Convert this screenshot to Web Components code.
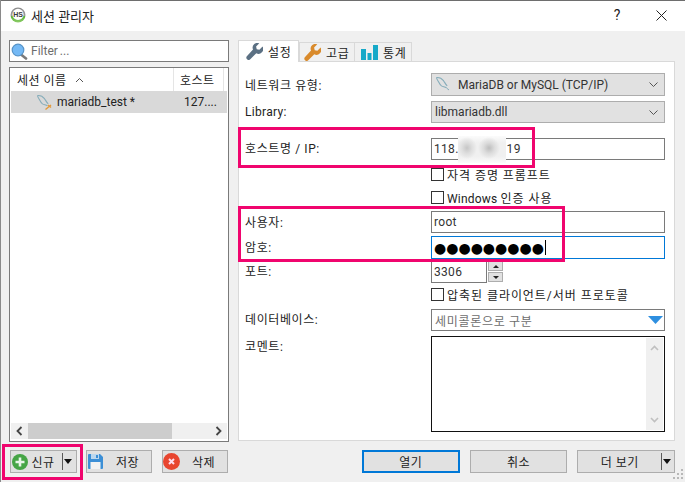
<!DOCTYPE html>
<html lang="ko">
<head>
<meta charset="utf-8">
<title>세션 관리자</title>
<style>
  html, body { margin:0; padding:0; background:#f0f0f0; }
  body { font:12px Roboto, "Noto Sans CJK KR", sans-serif; color:#1a1a1a; }
</style>
</head>
<body>
<session-manager></session-manager>

<script>
const WRENCH = 'M15.600 3.400l-3 3-2.500-.6-.6-2.500 3-3a4.500 4.500 0 0 0-5.900 5.900L1 12.300a2.100 2.100 0 0 0 3 3l5.700-5.600a4.500 4.500 0 0 0 5.900-6.300z';
const dolphin = (tail) => `<svg width="17" height="17" viewBox="0 0 17 17" fill="none">
  <path d="M1.500 1.500c3-.4 5.200.8 7 3.200 1.200 1.700 2 3.600 3.700 5.200M1.500 1.500c.2 2 1.300 2.800 2 4.200.8 1.600 1.300 3 3 4.200 1.600 1 3.400.8 5 2" stroke="#86adba" stroke-width="1.100"/>
  ${tail ? '<path d="M9.500 15.500l5.500-4.500M12 11l3 2.500" stroke="#e39a3c" stroke-width="1.400"/>' : '<path d="M11.500 12l2.500 2" stroke="#86adba"/>'}
</svg>`;

class TitleBar extends HTMLElement {
  constructor() {
    super();
    this.attachShadow({ mode: 'open' });
    this.shadowRoot.innerHTML = `
      <style>
        :host { display:flex; align-items:center; height:30px; background:#fff; border-top:1px solid #6e6e6e; font-size:13px; }
        .logo { margin:0 5px 0 9px; width:16px; height:16px; position:relative; top:-1px; }
        .name { flex:1; color:#222; position:relative; top:-1px; }
        .help { width:16px; text-align:center; margin-right:31px; font-size:14px; position:relative; top:-1px; }
        svg.x { margin-right:18px; position:relative; top:-1px; }
      </style>
      <svg class="logo" viewBox="0 0 16 16">
        <defs><linearGradient id="g" x1="0" y1="0" x2="0" y2="1">
          <stop offset="0" stop-color="#8a8a8a"/><stop offset=".55" stop-color="#9a9a9a"/>
          <stop offset=".6" stop-color="#5cb23a"/><stop offset="1" stop-color="#8fce6a"/>
        </linearGradient></defs>
        <circle cx="8" cy="8" r="7.500" fill="url(#g)"/>
        <circle cx="8" cy="7.400" r="5.600" fill="#fff"/>
        <text x="8" y="10" font-size="7" font-weight="700" text-anchor="middle" fill="#3a3a3a" font-family="Liberation Sans">HS</text>
      </svg>
      <span class="name"><slot></slot></span>
      <span class="help">?</span>
      <svg class="x" width="11" height="11" viewBox="0 0 11 11"><path d="M.5.500l10 10M10.500.500l-10 10" stroke="#222" stroke-width="1"/></svg>`;
  }
}
customElements.define('title-bar', TitleBar);

class FilterBox extends HTMLElement {
  constructor() {
    super();
    this.attachShadow({ mode: 'open' });
    this.shadowRoot.innerHTML = `
      <style>
        :host { display:flex; align-items:center; height:20px; background:#fff; border:1px solid #7a7a7a; color:#6d6d6d; word-spacing:-1px; }
        svg { margin:0 3px 0 1px; flex:none; }
      </style>
      <svg width="17" height="17" viewBox="0 0 17 17">
        <line x1="10" y1="11.500" x2="15" y2="15.500" stroke="#7b7b7b" stroke-width="2.600" stroke-linecap="round"/>
        <circle cx="7" cy="7" r="5.800" fill="#74b9f5" stroke="#5593c8" stroke-width="1.200"/>
      </svg>
      <slot></slot>`;
  }
}
customElements.define('filter-box', FilterBox);

class SessionList extends HTMLElement {
  constructor() {
    super();
    this.attachShadow({ mode: 'open' });
    this.shadowRoot.innerHTML = `
      <style>
        :host { display:flex; flex-direction:column; flex:1; background:#fff; border:1px solid #7a7a7a; padding:0 1px 1px; min-height:0; color:#222; }
        .head { display:flex; height:23px; align-items:center; letter-spacing:.5px; }
        .head div { height:100%; display:flex; align-items:center; border-right:1px solid #e5e5e5; box-sizing:border-box; }
        .c1 { width:163px; padding-left:6px; gap:8px; }
        .c2 { width:50px; padding-left:6px; }
        .row { display:flex; align-items:center; height:22px; background:#d9d9d9; width:216px; }
        .row svg { margin-left:25px; margin-right:4px; flex:none; }
        .name { width:127px; }
        .fill { flex:1; }
        .sb { height:16px; display:flex; align-items:center; background:#f0f0f0; width:216px; margin-bottom:1px; }
        .arrow { width:17px; display:flex; justify-content:center; flex:none; }
        .thumb { width:144px; height:16px; background:#cdcdcd; }
        .rest { flex:1; }
      </style>
      <div class="head">
        <div class="c1">세션 이름 <svg width="9" height="6" viewBox="0 0 9 6" fill="none"><path d="M1 5l3.500-3.500L8 5" stroke="#555"/></svg></div>
        <div class="c2">호스트</div>
      </div>
      <div class="row">${dolphin(true)}<span class="name">mariadb_test *</span><span>127....</span></div>
      <div class="fill"></div>
      <div class="sb">
        <span class="arrow"><svg width="7" height="10" viewBox="0 0 7 10" fill="none"><path d="M5.500 1l-4 4 4 4" stroke="#444" stroke-width="1.800"/></svg></span>
        <span class="thumb"></span><span class="rest"></span>
        <span class="arrow"><svg width="7" height="10" viewBox="0 0 7 10" fill="none"><path d="M1.500 1l4 4-4 4" stroke="#444" stroke-width="1.800"/></svg></span>
      </div>`;
  }
}
customElements.define('session-list', SessionList);

class HsButton extends HTMLElement {
  constructor() {
    super();
    this.attachShadow({ mode: 'open' });
    const split = this.hasAttribute('split');
    this.shadowRoot.innerHTML = `
      <style>
        :host { display:flex; align-items:center; box-sizing:border-box; height:23px; background:#e1e1e1; border:1px solid #adadad; color:#222; letter-spacing:.5px; }
        :host([primary]) { border:2px solid #0078d7; }
        .ic { display:flex; flex:none; }
        .txt { flex:1; text-align:center; padding-right:var(--text-pad, 0); }
        .split { flex:none; width:var(--split, 14px); height:21px; display:flex; align-items:center; box-sizing:border-box; }
        .split i { display:block; width:1px; height:17px; background:#5a5a5a; margin-right:1px; flex:none; }
        .split b { width:0; height:0; border:4.500px solid transparent; border-top:5px solid #111; border-bottom:0; flex:none; }
      </style>
      <span class="ic"><slot name="icon"></slot></span>
      <span class="txt"><slot></slot></span>
      ${split ? '<span class="split"><i></i><b></b></span>' : ''}`;
  }
}
customElements.define('hs-button', HsButton);

class HsTabs extends HTMLElement {
  constructor() {
    super();
    this.attachShadow({ mode: 'open' });
    const tab = (label, icon, cls = '') => `<div class="tab ${cls}">${icon}<span>${label}</span></div>`;
    const wrench = c => `<svg width="17" height="17" viewBox="0 0 16 16"><path d="${WRENCH}" fill="${c}"/></svg>`;
    const bars = `<svg width="17" height="17" viewBox="0 0 17 17"><path d="M0 5h5v11H0zM6.500 9h4v7h-4zM12 1h5v15h-5z" fill="#16a9c8"/></svg>`;
    this.shadowRoot.innerHTML = `
      <style>
        :host { display:flex; align-items:flex-end; height:21px; position:relative; z-index:1; color:#222; letter-spacing:.8px; }
        .tab { display:flex; align-items:center; gap:5px; box-sizing:border-box; height:19px; width:56px; padding-left:4px; background:#f0f0f0; border:1px solid #d9d9d9; border-bottom:0; margin-right:-1px; }
        .tab + .tab + .tab { width:58px; padding-left:6px; }
        .on { width:61px; height:22px; background:#fff; padding:0 0 1px 7px; margin-bottom:-1px; margin-right:0; z-index:1; }
      </style>
      ${tab('설정', wrench('#5b7083'), 'on')}
      ${tab('고급', wrench('#d98a2b'))}
      ${tab('통계', bars)}`;
  }
}
customElements.define('hs-tabs', HsTabs);

class HsCombo extends HTMLElement {
  constructor() {
    super();
    this.attachShadow({ mode: 'open' });
    const blue = this.hasAttribute('blue');
    this.shadowRoot.innerHTML = `
      <style>
        :host { display:flex; align-items:center; box-sizing:border-box; height:100%; background:#e1e1e1; border:1px solid #adadad; padding-left:3px; color:#333; letter-spacing:0; }
        :host([blue]) { background:#fff; border-color:#7a7a7a; color:#6d6d6d; letter-spacing:.7px; }
        .t { flex:1; display:flex; align-items:center; gap:6px; }
        .c { margin-right:6px; }
        .tri { margin-right:1px; }
      </style>
      <span class="t"><slot></slot></span>
      ${blue
        ? '<svg class="tri" width="15" height="8" viewBox="0 0 15 8"><path d="M0 0h15L7.500 8z" fill="#2e8fe0"/></svg>'
        : '<svg class="c" width="9" height="5" viewBox="0 0 9 5" fill="none"><path d="M.5.500l4 4 4-4" stroke="#555"/></svg>'}`;
  }
}
customElements.define('hs-combo', HsCombo);

class HsInput extends HTMLElement {
  constructor() {
    super();
    this.attachShadow({ mode: 'open' });
    this.shadowRoot.innerHTML = `
      <style>
        :host { display:flex; align-items:center; box-sizing:border-box; height:100%; background:#fff; border:1px solid #7a7a7a; padding-left:2px; color:#333; letter-spacing:.3px; position:relative; }
        :host([focus]) { border-color:#0078d7; }
      </style>
      <slot></slot>`;
  }
}
customElements.define('hs-input', HsInput);

class HsCheck extends HTMLElement {
  constructor() {
    super();
    this.attachShadow({ mode: 'open' });
    this.shadowRoot.innerHTML = `
      <style>
        :host { display:flex; align-items:center; gap:3px; height:100%; color:#222; letter-spacing:.95px; white-space:nowrap; }
        i { display:block; box-sizing:border-box; width:13px; height:13px; background:#fff; border:1px solid #333; flex:none; }
      </style>
      <i></i><span><slot></slot></span>`;
  }
}
customElements.define('hs-check', HsCheck);

class HsSpin extends HTMLElement {
  constructor() {
    super();
    this.attachShadow({ mode: 'open' });
    this.shadowRoot.innerHTML = `
      <style>
        :host { display:flex; height:100%; width:72px; }
        .v { flex:1; box-sizing:border-box; border:1px solid #7a7a7a; background:#fff; padding-left:2px; display:flex; align-items:center; color:#333; letter-spacing:.3px; }
        .s { width:15px; margin-left:1px; display:flex; flex-direction:column; gap:1px; }
        .s span { height:10px; background:#e1e1e1; border:1px solid #adadad; box-sizing:border-box; display:flex; align-items:center; justify-content:center; }
        .u { border-bottom:3.500px solid #222; border-left:3px solid transparent; border-right:3px solid transparent; }
        .d { border-top:3.500px solid #222; border-left:3px solid transparent; border-right:3px solid transparent; }
      </style>
      <div class="v"><slot></slot></div>
      <div class="s"><span><i class="u"></i></span><span><i class="d"></i></span></div>`;
  }
}
customElements.define('hs-spin', HsSpin);

class HsMemo extends HTMLElement {
  constructor() {
    super();
    this.attachShadow({ mode: 'open' });
    this.shadowRoot.innerHTML = `
      <style>
        :host { display:flex; justify-content:flex-end; box-sizing:border-box; height:100%; background:#fff; border:1px solid #111; padding:1px; }
        .sb { width:17px; background:#f0f0f0; display:flex; flex-direction:column; justify-content:space-between; align-items:center; padding:7px 0; box-sizing:border-box; }
      </style>
      <div class="sb">
        <svg width="9" height="6" viewBox="0 0 9 6" fill="none"><path d="M1 5l3.500-3.500L8 5" stroke="#c0c0c0" stroke-width="1.600"/></svg>
        <svg width="9" height="6" viewBox="0 0 9 6" fill="none"><path d="M1 1l3.500 3.500L8 1" stroke="#c0c0c0" stroke-width="1.600"/></svg>
      </div>`;
  }
}
customElements.define('hs-memo', HsMemo);

class PinkMark extends HTMLElement {
  constructor() {
    super();
    this.attachShadow({ mode: 'open' });
    this.shadowRoot.innerHTML = `
      <style>:host { display:block; position:absolute; box-sizing:border-box; border:3px solid #f0056e; pointer-events:none; z-index:5; }</style>`;
  }
}
customElements.define('pink-mark', PinkMark);

class SessionManager extends HTMLElement {
  constructor() {
    super();
    this.attachShadow({ mode: 'open' });
    this.shadowRoot.innerHTML = `
      <style>
        :host { display:flex; flex-direction:column; position:relative; width:685px; height:482px; overflow:hidden; background:#f0f0f0; font:12px Roboto, "Noto Sans CJK KR", sans-serif; box-sizing:border-box; border-left:1px solid #8a8a8a; }
        .main { flex:1; display:flex; min-height:0; padding:9px 0 0 8px; }
        .left { width:220px; display:flex; flex-direction:column; flex:none; }
        .left session-list { margin-top:5px; }
        .lbtns { display:flex; height:23px; margin:8px 0 9px 1px; }
        .lbtns hs-button { width:66px; }
        .lbtns hs-button:first-child { width:67px; margin-right:9px; --text-pad:4px; }
        .lbtns hs-button + hs-button + hs-button { margin-left:10px; }
        .lbtns hs-button:first-child [slot=icon] { margin-left:1px; }
        .right { width:437px; margin-left:9px; display:flex; flex-direction:column; flex:none; }
        .panel { flex:1; box-sizing:border-box; background:#fff; border:1px solid #d9d9d9; padding:11px 8px 0 6px; display:grid; grid-template-columns:186px 234px; align-content:start; color:#222; letter-spacing:.6px; min-height:0; }
        .lb { display:flex; align-items:center; box-sizing:border-box; }
        .up { padding-bottom:3px; }
        .rbtns { display:flex; height:23px; margin:9px 0 9px 124px; }
        .rbtns hs-button { width:98px; }
        .rbtns hs-button + hs-button { margin-left:10px; }
        .blur { position:absolute; left:26px; top:-3px; width:48px; height:27px; background:radial-gradient(ellipse 10px 11px at 9px 12px,#c6c6c6 0,#dedede 50%,transparent 100%),radial-gradient(ellipse 11px 11px at 31px 12px,#bdbdbd 0,#dcdcdc 50%,transparent 100%),linear-gradient(#fbfbfb,#f0f0f0 25%,#f0f0f0 75%,#fbfbfb); }
        .gap { display:inline-block; width:48px; }
        .dots { font-family:"DejaVu Sans", sans-serif; font-size:14px; letter-spacing:0; color:#000; line-height:18px; }
        .caret { display:inline-block; width:1px; height:15px; background:#000; margin-left:1px; }
        .h23 { height:23px; } .h22 { height:22px; }
        .grip { position:absolute; right:1px; bottom:2px; }
      </style>
      <title-bar>세션 관리자</title-bar>
      <div class="main">
        <div class="left">
          <filter-box>Filter ...</filter-box>
          <session-list></session-list>
          <div class="lbtns">
            <hs-button split>
              <svg slot="icon" width="16" height="16" viewBox="0 0 16 16"><circle cx="8" cy="8" r="8" fill="#46a546"/><path d="M8 3.500v9M3.500 8h9" stroke="#e8f5e8" stroke-width="2.600"/></svg>신규
            </hs-button>
            <hs-button>
              <svg slot="icon" width="17" height="17" viewBox="0 0 17 17"><path d="M1 2q0-1 1-1h11l3 3v11q0 1-1 1H2q-1 0-1-1z" fill="#3c8fd6"/><path d="M4 1h8v5H4z" fill="#bcd7ee"/><path d="M9 2h2v3H9z" fill="#3c8fd6"/><path d="M3.500 9h10v7h-10z" fill="#f2f2f2"/></svg>저장
            </hs-button>
            <hs-button>
              <svg slot="icon" width="17" height="17" viewBox="0 0 17 17"><circle cx="8.500" cy="8.500" r="8.500" fill="#e8452f"/><path d="M6 6l5 5M11 6l-5 5" stroke="#fde" stroke-width="2"/></svg>삭제
            </hs-button>
          </div>
        </div>
        <div class="right">
          <hs-tabs></hs-tabs>
          <div class="panel">
            <div class="lb h23">네트워크 유형:</div>
            <div class="h23"><hs-combo>${dolphin(false)}<span>MariaDB or MySQL (TCP/IP)</span></hs-combo></div>
            <div class="lb h22" style="margin-top:5px;letter-spacing:.3px">Library:</div>
            <div class="h22" style="margin-top:5px"><hs-combo>libmariadb.dll</hs-combo></div>
            <div class="lb h22 up" style="margin-top:15px">호스트명 / IP:</div>
            <div class="h22" style="margin-top:15px"><hs-input>118.<span class="blur"></span><span class="gap"></span>19</hs-input></div>
            <div style="height:13px;margin-top:8px"></div>
            <div style="height:13px;margin-top:8px"><hs-check>자격 증명 프롬프트</hs-check></div>
            <div style="height:13px;margin-top:10px"></div>
            <div style="height:13px;margin-top:10px"><hs-check><span style="letter-spacing:.2px">Windows </span>인증 사용</hs-check></div>
            <div class="lb h22 up" style="margin-top:7px;padding-bottom:2px">사용자:</div>
            <div class="h22" style="margin-top:7px"><hs-input>root</hs-input></div>
            <div class="lb h23 up" style="margin-top:3px">암호:</div>
            <div class="h23" style="margin-top:3px"><hs-input focus><span class="dots">●●●●●●●●●</span><span class="caret"></span></hs-input></div>
            <div class="lb h22 up" style="margin-top:2px">포트:</div>
            <div class="h22" style="margin-top:2px"><hs-spin>3306</hs-spin></div>
            <div style="height:13px;margin-top:5px"></div>
            <div style="height:13px;margin-top:5px"><hs-check>압축된 클라이언트/서버 프로토콜</hs-check></div>
            <div class="lb h22 up" style="margin-top:8px">데이터베이스:</div>
            <div class="h22" style="margin-top:8px"><hs-combo blue>세미콜론으로 구분</hs-combo></div>
            <div class="lb up" style="height:20px;margin-top:5px;padding-bottom:2px">코멘트:</div>
            <div style="height:96px;margin-top:5px"><hs-memo></hs-memo></div>
          </div>
          <div class="rbtns">
            <hs-button primary>열기</hs-button>
            <hs-button>취소</hs-button>
            <hs-button split style="--split:13px">더 보기</hs-button>
          </div>
        </div>
      </div>
      <svg class="grip" width="11" height="11" viewBox="0 0 11 11" fill="#b8b8b8"><path d="M8 0h2v2H8zM4 4h2v2H4zM8 4h2v2H8zM0 8h2v2H0zM4 8h2v2H4zM8 8h2v2H8z"/></svg>
      <pink-mark style="left:237px;top:127px;width:297px;height:41px"></pink-mark>
      <pink-mark style="left:237px;top:206px;width:327px;height:56px"></pink-mark>
      <pink-mark style="left:1px;top:444px;width:81px;height:36px"></pink-mark>`;
  }
}
customElements.define('session-manager', SessionManager);
</script>
</body>
</html>
